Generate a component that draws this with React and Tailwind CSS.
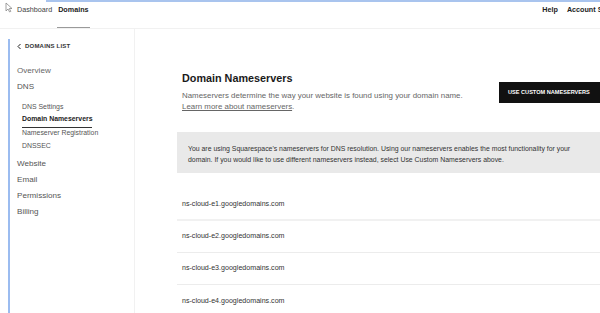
import React from "react";

export default function App() {
  const ns = [
    "ns-cloud-e1.googledomains.com",
    "ns-cloud-e2.googledomains.com",
    "ns-cloud-e3.googledomains.com",
    "ns-cloud-e4.googledomains.com",
  ];
  return (
    <div className="w-[600px] h-[313px] overflow-hidden bg-white text-[#222] flex flex-col" style={{ fontFamily: '"Liberation Sans", Arial, sans-serif' }}>
      {/* header */}
      <div className="relative h-[29px] shrink-0 border-b border-[#f1f1f1] flex items-start">
        <div className="absolute top-0 left-[46px] right-0 h-[2px] bg-[#a9c4ee]" />
        <svg className="absolute left-[5px] top-[2px]" width="9" height="11" viewBox="0 0 9 11">
          <path d="M1 1 L1 9 L3 7 L4.6 10 L5.8 9.4 L4.3 6.5 L7 6.5 Z" fill="white" stroke="#888" strokeWidth="0.8" strokeLinejoin="round" />
        </svg>
        <div className="flex items-start pl-[17px] gap-[6px] pt-[5px] text-[7.2px] leading-[9px]">
          <span className="text-[#444]">Dashboard</span>
          <span className="relative font-bold text-[#222]">
            Domains
            <span className="absolute left-[-1px] right-[-1px] top-[22px] h-[1px] bg-[#9a9a9a]" />
          </span>
        </div>
        <div className="ml-auto flex gap-[9px] pt-[5px] text-[7.2px] leading-[9px] font-bold text-[#222] whitespace-nowrap mr-[-26px]">
          <span>Help</span>
          <span>Account Settings</span>
        </div>
      </div>

      <div className="flex flex-1 min-h-0">
        {/* sidebar */}
        <div className="w-[135px] shrink-0 border-r border-[#f1f1f1] pt-[10px]">
          <div className="ml-[8px] h-full border-l-[2px] border-[#9bbcf0] pl-[6px] pt-[3px]">
            <div className="flex items-center gap-[2px] text-[6px] font-bold tracking-[0.2px] text-[#333] h-[9px]">
              <svg width="7" height="7" viewBox="0 0 7 7"><path d="M4.5 1 L2 3.5 L4.5 6" fill="none" stroke="#222" strokeWidth="1" /></svg>
              DOMAINS LIST
            </div>
            <div className="pl-[1px] mt-[15px] flex flex-col text-[8.1px] leading-[10px] text-[#555]">
              <span className="h-[16px] text-[#666]">Overview</span>
              <span className="h-[16px] text-[#555]">DNS</span>
              <div className="flex flex-col pl-[5px] mt-[5px] text-[6.9px] leading-[8px]">
                <span className="h-[12px] text-[#555]">DNS Settings</span>
                <span className="h-[13px] font-bold text-[#222] self-start border-b border-[#333] pb-[2px] mb-[1px]">Domain Nameservers</span>
                <span className="h-[13px] text-[#555]">Nameserver Registration</span>
                <span className="h-[14px] text-[#555]">DNSSEC</span>
              </div>
              <span className="h-[16px] mt-[3px] text-[#555]">Website</span>
              <span className="h-[16px] text-[#555]">Email</span>
              <span className="h-[16px] text-[#555]">Permissions</span>
              <span className="h-[16px] text-[#555]">Billing</span>
            </div>
          </div>
        </div>

        {/* main */}
        <div className="flex-1 pl-[42px] pt-[42px] min-w-0">
          <div className="w-[432px]">
            <div className="flex items-start">
              <div className="pl-[5px] flex-1 min-w-0">
                <div className="mt-[1px] text-[10.8px] leading-[13px] font-bold text-[#1a1a1a]">Domain Nameservers</div>
                <div className="mt-[5px] text-[7.9px] leading-[11px] text-[#666] whitespace-nowrap">
                  Nameservers determine the way your website is found using your domain name.
                  <br />
                  <span className="underline">Learn more about nameservers</span>.
                </div>
              </div>
              <div className="mt-[11px] w-[110px] shrink-0 h-[21px] bg-[#111] text-white text-[5.6px] font-bold flex items-center pl-[9px] whitespace-nowrap">
                USE CUSTOM NAMESERVERS
              </div>
            </div>

            <div className="mt-[20px] h-[41px] bg-[#e9e9e9] pl-[11px] pt-[11px] text-[6.9px] leading-[11px] text-[#333] whitespace-nowrap">
              You are using Squarespace's nameservers for DNS resolution. Using our nameservers enables the most functionality for your
              <br />
              domain. If you would like to use different nameservers instead, select Use Custom Nameservers above.
            </div>

            <div className="mt-[16px] flex flex-col">
              {ns.map((n, i) => (
                <div key={n} className={`h-[32px] flex items-center pl-[5px] text-[7.1px] text-[#333] ${i < 3 ? (i === 0 ? "border-b-[2px] border-[#f1f1f1]" : "border-b border-[#ececec]") : ""}`}>
                  {n}
                </div>
              ))}
            </div>
          </div>
        </div>
      </div>
    </div>
  );
}
